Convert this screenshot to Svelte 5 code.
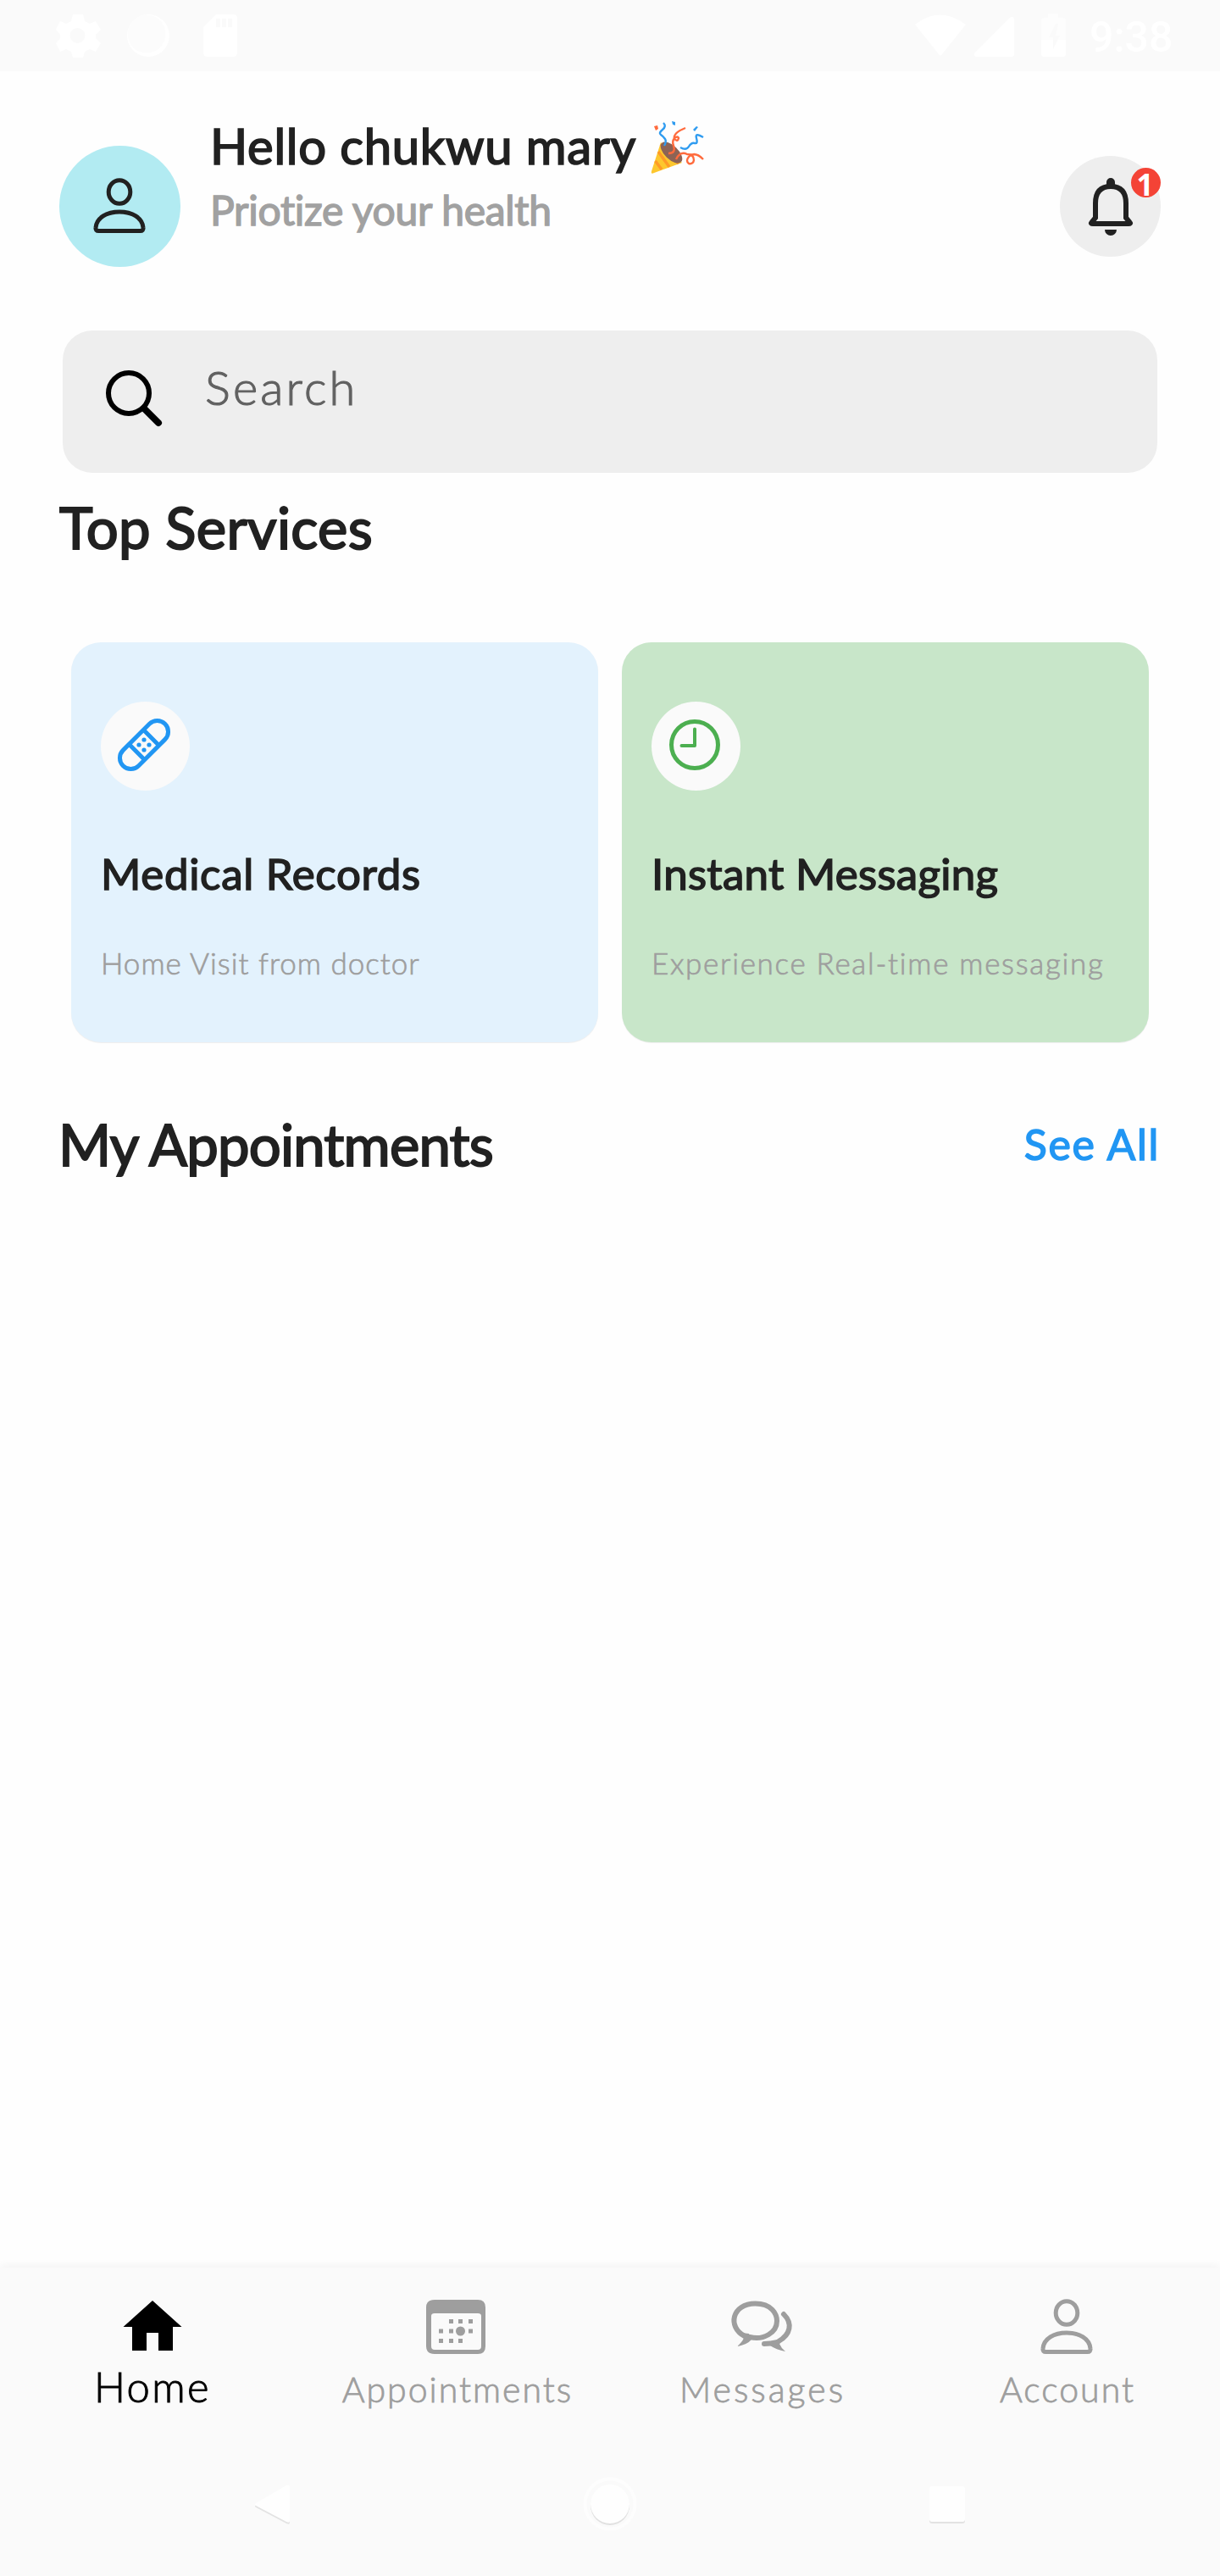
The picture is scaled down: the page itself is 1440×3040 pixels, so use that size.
<script>
  const services = [
    { icon: 'bandage', tone: 'blue', title: 'Medical Records', note: 'Home Visit from doctor' },
    { icon: 'clock', tone: 'green', title: 'Instant Messaging', note: 'Experience Real-time messaging' }
  ];
</script>

{#snippet person(cls)}
  <svg class={cls} viewBox="0 0 62 66" fill="none" stroke="currentColor" stroke-width="5">
    <ellipse cx="31" cy="16.5" rx="12.8" ry="13.8" />
    <path d="M3 58.5C4 47 16 40 31 40S58 47 59 58.5Q59.5 62.500 55.500 62.500H6.500Q2.500 62.500 3 58.500Z" />
  </svg>
{/snippet}

<div class="screen">
  <div class="status">
    <svg class="status-left" viewBox="0 0 216 54" fill="#fff">
      <path fill-rule="evenodd" d="M19 1h12l2 8 6 3 7-3 6 10-6 6v4l6 6-6 10-7-3-6 3-2 7H19l-2-7-6-3-7 3-5-10 5-6v-4l-5-6 5-10 7 3 6-3ZM24.500 17a9 9 0 1 0 0 18 9 9 0 0 0 0-18Z" />
      <circle cx="108" cy="26" r="25" /><circle cx="106" cy="24" r="22.500" fill="#fcfcfc" />
      <path fill-rule="evenodd" d="M188 1h20q5 0 5 5v40q0 5-5 5h-30q-5 0-5-5V16ZM188 6v10h5V6Zm7 0v10h5V6Zm7 0v10h5V6Z" />
    </svg>
    <div class="status-right">
      <svg class="status-signals" viewBox="0 0 180 54" fill="#fff">
        <path d="M1 13Q30-10 61 13L33 48q-2 3-4 0Z" />
        <path d="M73 51q-4-2-1-5L113 5q4-3 5 1v42q0 3-3 3Z" />
        <path opacity=".5" d="M150 32V8q0-3 3-3h5V0h12v5h6q3 0 3 3v24Z" />
        <path d="M150 31h29v17q0 3-3 3h-23q-3 0-3-3Z" />
        <path d="M167 12L159 28h5v14l8-16h-5l3-14Z" fill="#fafafa" />
      </svg>
      <span class="time">9:38</span>
    </div>
  </div>

  <main>
    <header>
      <div class="avatar">{@render person('avatar-icon')}</div>
      <div class="greeting">
        <h1>
          <span class="hello">Hello chukwu mary</span>
          <svg class="party" viewBox="0 0 62 64" fill="none" stroke-width="2.400">
            <path d="M12 26L1 60Q0 64 4 62L37 50Z" fill="#fdc72e" />
            <path d="M9 37L22 55M5.500 48l7.500 10M12 28l21 23" stroke="#ff9b26" stroke-width="3.500" />
            <ellipse cx="24.500" cy="38" rx="16" ry="8" transform="rotate(44 24.500 38)" fill="#8d6355" stroke="none" />
            <path d="M15 3q4 4-1 8t-2 6 5 5-1 8M35 32q7 4 10-1t7-4 2-6 8-1" stroke="#309cf0" />
            <path d="M21 39q9 0 6-9-2-5 1-9 4-3 5 0-1 5-5 1-2-7 13-13M30 46q5-10 13-6 8 0 8 7-1 5-6 4-4-3 0-8 7-7 17 3" stroke="#ff6b3d" />
            <path d="M4 7l4-1 1 4-3 2Z" fill="#ff6b3d" />
            <path d="M25 1l4 1v4l-3-1ZM56 8l-4 5-2-2 4-4Z" fill="#309cf0" />
          </svg>
        </h1>
        <p>Priotize your health</p>
      </div>
      <div class="bell">
        <svg class="bell-icon" viewBox="0 0 54 70">
          <path d="M9 48V31Q9 11 27 11T45 31V48L49.500 53.500Q51 55 48 55H6Q3 55 4.500 53.500Z" fill="none" stroke="#212121" stroke-width="6" />
          <path d="M12 52H42V58H12ZM22 12V6a5 5 0 0 1 10 0v6ZM20 62H34a7 7 0 0 1-14 0Z" fill="#212121" />
        </svg>
        <span class="badge">1</span>
      </div>
    </header>

    <div class="search">
      <svg class="search-icon" viewBox="0 0 68 68" fill="none" stroke="#000">
        <circle cx="28" cy="28" r="24" stroke-width="6" />
        <path d="M46 46L63 63" stroke-width="8" stroke-linecap="round" />
      </svg>
      <span>Search</span>
    </div>

    <h2 class="top">Top Services</h2>

    <div class="cards">
      {#each services as s}
        <section class="card {s.tone}">
          <div class="disc">
            {#if s.icon === 'bandage'}
              <svg class="bandage" viewBox="0 0 62 62">
                <g transform="rotate(-45 31 31)" fill="none" stroke="currentColor" stroke-width="5">
                  <rect x="-4" y="18" width="70" height="26" rx="13" />
                  <path d="M19 18V44M43 18V44" />
                </g>
                <g fill="currentColor">
                  <circle cx="31" cy="25" r="2.600" /><circle cx="25" cy="31" r="2.600" />
                  <circle cx="37" cy="31" r="2.600" /><circle cx="31" cy="37" r="2.600" />
                </g>
              </svg>
            {:else}
              <svg class="clock" viewBox="0 0 60 60" fill="none" stroke="currentColor">
                <circle cx="30" cy="30" r="27.500" stroke-width="5" />
                <path d="M30 11.500V31H14.500" stroke-width="4" stroke-linecap="round" stroke-linejoin="round" />
              </svg>
            {/if}
          </div>
          <h3>{s.title}</h3>
          <p>{s.note}</p>
        </section>
      {/each}
    </div>

    <div class="row">
      <h2 class="mine">My Appointments</h2>
      <span class="see">See All</span>
    </div>
  </main>

  <nav>
    <div class="tab active">
      <svg class="tab-icon" viewBox="0 0 72 72"><path d="M36 4L70.500 35H60V63H43V42H29V63H12V35H1.500Z" fill="currentColor" /></svg>
      <span class="t-home">Home</span>
    </div>
    <div class="tab">
      <svg class="tab-icon" viewBox="0 0 72 72" fill="currentColor">
        <path fill-rule="evenodd" d="M9 3H60Q69 3 69 12V58Q69 67 60 67H9Q-1 67-1 58V12Q-1 3 9 3ZM9 19Q5 19 5 22V58Q5 62 9 62H60Q64 62 64 58V22Q64 19 60 19Z" />
        <path d="M26 26h5v5h-5ZM37 26h5v5h-5ZM49 26h5v5h-5ZM14 37.500h5v5h-5ZM26 37.500h5v5h-5ZM49 37.500h5v5h-5ZM14 49h5v5h-5ZM26 49h5v5h-5ZM37 49h5v5h-5Z" />
        <circle cx="39.500" cy="40" r="5.500" />
      </svg>
      <span class="t-app">Appointments</span>
    </div>
    <div class="tab">
      <svg class="tab-icon" viewBox="0 0 72 72" fill="none" stroke="currentColor" stroke-linecap="round">
        <path stroke-width="6" d="M15 46C-6 35 0 7.500 27.500 7.500C47 7.500 53 20 53 28C53 42 37 51 21 47" />
        <path fill="currentColor" stroke="none" d="M11 42L14 48Q12 53 6 58Q18 56 23 50L20 43Z" />
        <path stroke-width="6" d="M61 20C72 31 69 44 55 52M38 55Q45 55 54 53" />
        <path fill="currentColor" stroke="none" d="M58 50L56 55Q58 60 63 64Q52 62 45 57L53 50Z" />
      </svg>
      <span class="t-msg">Messages</span>
    </div>
    <div class="tab">
      {@render person('account-icon')}
      <span class="t-acc">Account</span>
    </div>
  </nav>

  <div class="system">
    <svg class="sys-icon" viewBox="0 0 64 64"><path d="M12 33L48 12q4-1 4 2v40q0 3-4 1L12 36q-2-1 0-3Z" fill="#e3e3e3" /><path d="M12 31L48 10q4-1 4 2v40q0 3-4 1L12 34q-2-1 0-3Z" fill="#fefefe" /></svg>
    <svg class="sys-icon" viewBox="0 0 64 64"><circle cx="32" cy="32" r="29.500" fill="none" stroke="#fdfdfd" stroke-width="4" /><circle cx="32" cy="34" r="23" fill="#e1e1e1" /><circle cx="32" cy="32" r="23" fill="#fefefe" /></svg>
    <svg class="sys-icon" viewBox="0 0 64 64"><rect x="11" y="13" width="42" height="42" rx="3" fill="#e3e3e3" /><rect x="11" y="11" width="42" height="42" rx="3" fill="#fefefe" /></svg>
  </div>
</div>

<style>
  :global(body) { margin: 0; background: #fff; }
  .screen { width: 1440px; height: 3040px; display: flex; flex-direction: column; overflow: hidden; background: #fefefe; color: #212121; font-family: Lato, sans-serif; font-variant-ligatures: none; }
  h1, h2, h3, p { margin: 0; white-space: nowrap; }
  h1, h2, h3, .greeting p, .see { font-weight: 400; -webkit-text-stroke: 0.03em currentColor; }
  svg { display: block; flex: none; overflow: visible; }
  .status { height: 84px; box-sizing: border-box; background: #fafafa; display: flex; justify-content: space-between; padding: 16px 56px 0 67px; }
  .status-left { width: 216px; height: 54px; }
  .status-right { display: flex; gap: 27px; }
  .status-signals { width: 180px; height: 54px; }
  .time { font: 500 50px/56px Roboto, sans-serif; color: #fff; width: 98px; white-space: nowrap; }
  main { flex: 1; }
  header { display: flex; align-items: flex-start; padding: 0 70px; height: 306px; box-sizing: border-box; }
  .avatar { width: 143px; height: 143px; margin-top: 88px; border-radius: 50%; background: #b2ebf2; display: flex; justify-content: center; align-items: center; }
  .avatar-icon { width: 62px; height: 66px; margin: 0 2px 2px 0; }
  .greeting { margin: 50px 0 0 35px; flex: 1; }
  h1 { display: flex; height: 76px; font-size: 58px; line-height: 76px; }
  .party { width: 62px; height: 64px; margin: 8px 0 0 16px; }
  .hello { width: 504px; letter-spacing: 0.7px; }
  .greeting p { font-size: 48px; line-height: 76px; color: #a1a1a1; letter-spacing: -0.3px; }
  .bell { position: relative; width: 119px; height: 119px; margin-top: 100px; border-radius: 50%; background: #eee; display: flex; justify-content: center; }
  .bell-icon { width: 54px; height: 70px; margin-top: 25px; }
  .badge { position: absolute; top: 14px; right: 0; width: 35px; height: 35px; border-radius: 50%; background: #f44336; color: #fff; font: 700 35px/40px "Noto Sans", sans-serif; text-align: center; text-indent: -2px; }
  .search { height: 168px; margin: 0 74px; border-radius: 35px; background: #eee; display: flex; align-items: center; padding-left: 50px; box-sizing: border-box; }
  .search-icon { width: 68px; height: 68px; margin-top: -8px; }
  .search span { font-size: 56px; line-height: 70px; margin: -35px 0 0 50px; color: #616161; letter-spacing: 3.2px; }
  .search span, .card p, .tab span { font-weight: 300; -webkit-text-stroke: 0.02em currentColor; }
  h2 { font-size: 67px; line-height: 80px; }
  .top { margin: 24px 0 0 70px; letter-spacing: 0.3px; }
  .cards { display: grid; grid-template-columns: 622px 622px; gap: 28px; padding: 96px 0 0 84px; }
  .card { height: 472px; border-radius: 35px; padding: 70px 36px 0 35px; box-sizing: border-box; box-shadow: 0 1px 1px #0001; }
  .blue { background: #e3f2fd; }
  .green { background: #c8e6c9; }
  .disc { width: 105px; height: 105px; border-radius: 50%; background: #fafafa; display: flex; align-items: center; justify-content: center; }
  .blue .disc { color: #2196f3; }
  .green .disc { color: #4caf50; }
  .bandage { width: 62px; height: 62px; margin: 0 3px 3px 0; }
  .clock { width: 60px; height: 60px; margin: 0 3px 3px 0; }
  h3 { margin-top: 67px; font-size: 51px; line-height: 62px; letter-spacing: 0.3px; }
  .blue h3 { letter-spacing: 0.7px; }
  .card p { margin-top: 53px; font-size: 35px; line-height: 42px; color: #9e9e9e; letter-spacing: 1px; }
  .green p { letter-spacing: 1.7px; }
  .row { display: flex; justify-content: space-between; align-items: center; padding: 80px 71px 0 69px; }
  .mine { letter-spacing: -0.8px; }
  .see { font-size: 50px; color: #2196f3; letter-spacing: 1.7px; white-space: nowrap; }
  nav { height: 210px; flex: none; background: #fafafa; display: grid; grid-template-columns: repeat(4, 360px); box-shadow: 0 -2px 10px #0000000d; }
  .tab { display: flex; flex-direction: column; align-items: center; padding-top: 35px; color: #9e9e9e; }
  .tab-icon { width: 72px; height: 72px; }
  .account-icon { width: 62px; height: 66px; margin: 2px 2px 4px 0; }
  .tab span { font-size: 41px; line-height: 50px; margin-top: 12px; white-space: nowrap; letter-spacing: 2px; }
  .active { color: #000; }
  .tab .t-home { font-size: 49px; margin-top: 8px; letter-spacing: 2.4px; }
  .tab .t-msg { letter-spacing: 3px; }
  .system { height: 154px; flex: none; background: #fafafa; display: flex; justify-content: space-between; padding: 0 290px 16px; align-items: center; box-sizing: border-box; }
  .sys-icon { width: 64px; height: 64px; }
</style>
